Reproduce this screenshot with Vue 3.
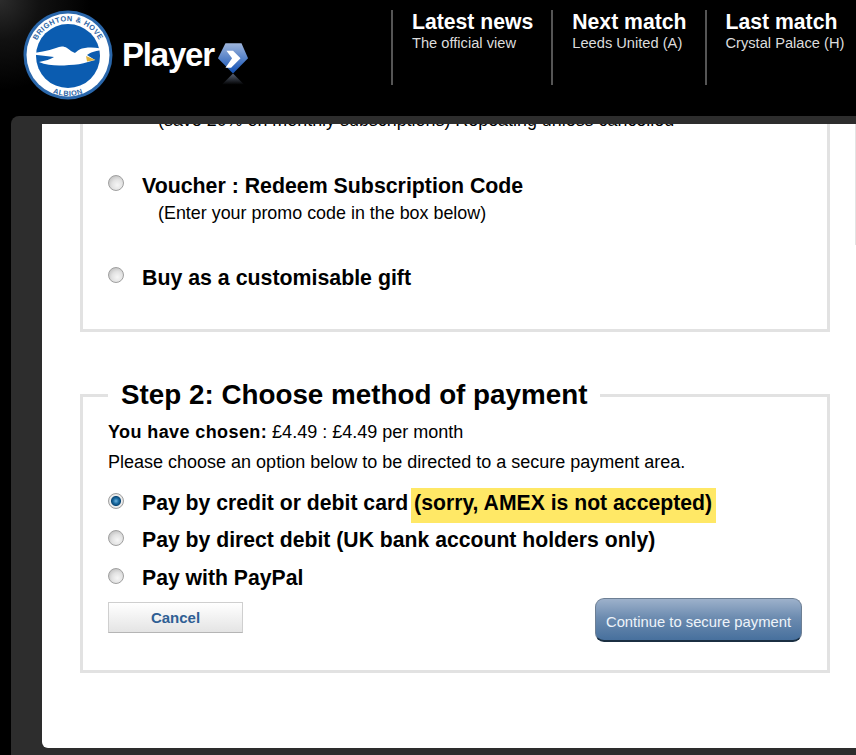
<template>
  <div class="page">
    <header class="top">
      <div class="brand">
        <svg class="crest" viewBox="0 0 90 90" width="90" height="90">
          <defs>
            <path id="arcTop" d="M 10.2 46 A 34.8 34.8 0 0 1 79.8 46" />
            <path id="arcBottom" d="M 5 46 A 40 40 0 0 0 85 46" />
          </defs>
          <circle cx="45" cy="45" r="44.5" fill="#2a67ab" />
          <circle cx="45" cy="45" r="41.5" fill="#fff" />
          <circle cx="45" cy="46" r="32" fill="#0b5cb0" />
          <text class="crest-text" font-size="7.4">
            <textPath href="#arcTop" startOffset="50%" text-anchor="middle">BRIGHTON &amp; HOVE</textPath>
          </text>
          <text class="crest-text" font-size="7.4">
            <textPath href="#arcBottom" startOffset="50%" text-anchor="middle">ALBION</textPath>
          </text>
          <path
            d="M5 44 C15 42 25 41 33 38 C37 36 41 36 44 38 C47 40 49 42 52 43 C54 41 58 38 62 38 C69 37 78 38 85 40 C77 40 69 41 64 45 L72 50 L65 52 C59 54 53 55 46 55 C37 56 25 56 16 52 C22 51 28 49 31 47 C23 46 14 45 5 44 Z"
            fill="#fff"
          />
          <path d="M63 46 L72.5 50 L64 51.5 Z" fill="#e0b23c" />
        </svg>
        <span class="player">Player</span>
        <svg class="gem" viewBox="0 0 34 46" width="32" height="44">
          <defs>
            <linearGradient id="gemFill" x1="0" y1="0" x2="0" y2="1">
              <stop offset="0" stop-color="#9fb6dc" />
              <stop offset="1" stop-color="#0f4fb4" />
            </linearGradient>
            <linearGradient id="gemGlow" x1="0" y1="0" x2="0" y2="1">
              <stop offset="0" stop-color="#5a6478" />
              <stop offset="1" stop-color="#000" />
            </linearGradient>
          </defs>
          <path d="M9 1 H26 L33 17 L17 33 L1 17 Z" fill="url(#gemFill)" />
          <path d="M10 9 H17 L25 17 L15 27 H9 L16 17 Z" fill="#fff" />
          <path d="M17 33 L29 45 H5 Z" fill="url(#gemGlow)" />
        </svg>
      </div>
      <nav class="links">
        <a v-for="link in links" :key="link.title" class="link">
          <strong>{{ link.title }}</strong>
          <span>{{ link.sub }}</span>
        </a>
      </nav>
    </header>

    <main class="panel">
      <div class="sheet">
        <section class="box first">
          <p class="clipped">(save 20% on monthly subscriptions) Repeating unless cancelled</p>
          <label class="plan voucher">
            <input type="radio" name="plan" />
            <span class="plan-text">
              <b>Voucher : Redeem Subscription Code</b>
              <small>(Enter your promo code in the box below)</small>
            </span>
          </label>
          <label class="plan gift">
            <input type="radio" name="plan" />
            <span class="plan-text"><b>Buy as a customisable gift</b></span>
          </label>
        </section>

        <fieldset class="box step">
          <legend>Step 2: Choose method of payment</legend>
          <p class="chosen"><b>You have chosen:</b> £4.49 : £4.49 per month</p>
          <p class="hint">Please choose an option below to be directed to a secure payment area.</p>
          <label class="pay">
            <input type="radio" name="pay" checked />
            <b>Pay by credit or debit card</b>
            <b class="note">(sorry, AMEX is not accepted)</b>
          </label>
          <label class="pay">
            <input type="radio" name="pay" />
            <b>Pay by direct debit (UK bank account holders only)</b>
          </label>
          <label class="pay">
            <input type="radio" name="pay" />
            <b>Pay with PayPal</b>
          </label>
          <div class="actions">
            <button type="button" class="cancel">Cancel</button>
            <button type="button" class="continue">Continue to secure payment</button>
          </div>
        </fieldset>
      </div>
    </main>
  </div>
</template>

<script setup>
const links = [
  { title: "Latest news", sub: "The official view" },
  { title: "Next match", sub: "Leeds United (A)" },
  { title: "Last match", sub: "Crystal Palace (H)" },
];
</script>

<style>
html,
body {
  margin: 0;
  background: #000;
}
</style>

<style scoped>
.page {
  width: 856px;
  height: 755px;
  display: flex;
  flex-direction: column;
  overflow: hidden;
  background: #000;
  color: #000;
  font-family: "Liberation Sans", Arial, sans-serif;
}

.top {
  height: 116px;
  flex: none;
  display: flex;
  background: radial-gradient(circle at 0 0, #2c2c2c 0, #111 40px, #000 90px);
}

.brand {
  width: 391px;
  flex: none;
  display: flex;
  align-items: flex-start;
  padding: 10px 0 0 23px;
  box-sizing: border-box;
}

.crest-text {
  font-family: "Liberation Sans", Arial, sans-serif;
  font-weight: 700;
  fill: #2f66a6;
  letter-spacing: 0.5px;
}

.player {
  margin: 26px 0 0 9px;
  color: #fff;
  font-size: 33px;
  font-weight: 700;
  letter-spacing: -1.2px;
}

.gem {
  margin: 32px 0 0 3px;
}

.links {
  display: flex;
  padding-top: 10px;
}

.link {
  height: 75px;
  padding-left: 19px;
  padding-right: 18px;
  border-left: 2px solid #555;
  display: flex;
  flex-direction: column;
}

.link:last-child {
  padding-right: 0;
}

.link strong {
  color: #fff;
  font-size: 21.2px;
  line-height: 23px;
}

.link span {
  color: #dcdcdc;
  font-size: 14.67px;
  line-height: 20px;
  white-space: nowrap;
}

.panel {
  flex: 1;
  margin-left: 11px;
  padding: 8px 0 7px 31px;
  display: flex;
  background: #2d2d2d;
  border-top-left-radius: 8px;
  min-height: 0;
}

.sheet {
  position: relative;
  flex: 1;
  overflow: hidden;
  background: #fff;
  border-bottom-left-radius: 6px;
  padding-left: 38px;
  padding-right: 26px;
}

/* sliver of the page scrollbar at the right edge */
.sheet::after {
  content: "";
  position: absolute;
  top: 0;
  right: 0;
  width: 1px;
  height: 121px;
  background: #e3e3e3;
}

.box {
  margin: 0;
  border: 3px solid #e2e2e2;
  box-sizing: border-box;
  min-width: 0;
}

.first {
  height: 222px;
  margin-top: -25px;
  border-top: 0;
  padding: 0 0 0 25px;
}

.clipped {
  margin: 11px 0 0 50px;
  font-size: 17.9px;
  line-height: 20px;
  white-space: nowrap;
}

.plan {
  display: flex;
  align-items: flex-start;
}

.voucher {
  margin-top: 44px;
}

.gift {
  margin-top: 43px;
}

.plan-text {
  display: flex;
  flex-direction: column;
}

.plan-text b {
  font-size: 21.33px;
  line-height: 24px;
}

.pay b {
  font-size: 21.2px;
  line-height: 24px;
}

.plan-text small {
  margin: 5px 0 0 16px;
  font-size: 17.9px;
  line-height: 20px;
}

input[type="radio"] {
  appearance: none;
  width: 16px;
  height: 16px;
  margin: 1px 18px 0 0;
  flex: none;
  border-radius: 50%;
  border: 1px solid #a0a0a0;
  box-sizing: border-box;
  background: radial-gradient(circle at 60% 65%, #f6f6f6 0, #e2e2e2 45%, #b0b0b0 100%);
}

input[type="radio"]:checked {
  background: radial-gradient(circle at 50% 50%, #6fb4e0 0, #1a6aa0 28%, #0d4a78 46%, #eee 56%, #cdcdcd 100%);
}

.step {
  height: 293px;
  margin-top: 48px;
  padding: 0 25px;
}

.step legend {
  margin-left: 0;
  padding: 0 13px;
  font-size: 27.8px;
  font-weight: 700;
  line-height: 30px;
}

.step p {
  margin: 0;
  font-size: 18px;
  line-height: 20px;
}

.chosen {
  padding-top: 12px;
}

.chosen b {
  letter-spacing: 0.4px;
}

.hint {
  margin-top: 10px !important;
}

.pay {
  display: flex;
  align-items: center;
  height: 37.5px;
}

.pay input {
  margin-top: -4px !important;
}

.pay:first-of-type {
  margin-top: 12px;
}

.note {
  margin: 5px 0 0 3px;
  padding: 3px 4px 8px 3px;
  background: #ffe866;
}

.actions {
  display: flex;
  justify-content: space-between;
  align-items: flex-start;
  margin-top: 5px;
}

.cancel {
  width: 135px;
  height: 31px;
  padding: 0;
  font: 700 15px "Liberation Sans", Arial, sans-serif;
  color: #2f5f94;
  border: 1px solid #cfcfcf;
  border-bottom-color: #b5b5b5;
  background: linear-gradient(#fff, #e4e4e4);
}

.continue {
  width: 207px;
  height: 44px;
  margin-top: -4px;
  padding: 5px 0 0;
  font: 14.8px "Liberation Sans", Arial, sans-serif;
  color: #eef4fa;
  border: 1px solid #6d7f94;
  border-bottom: 2px solid #1b2f42;
  border-radius: 9px;
  background: linear-gradient(#9db1cb 0, #6d8cb0 45%, #47709d 100%);
}
</style>
